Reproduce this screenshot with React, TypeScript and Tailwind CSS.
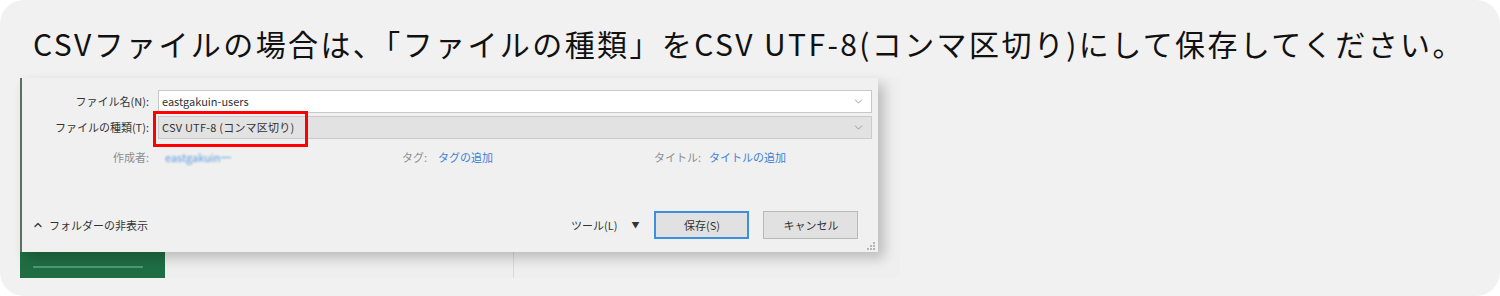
import { ChevronDown, ChevronUp } from "lucide-react";

const jp = "font-['Meiryo_UI','Noto_Sans_CJK_JP',sans-serif]";

// Windows の保存ダイアログ（スクリーンショット部分）
function SaveDialog() {
  return (
    <div className={`relative w-[858px] h-[174px] bg-[#f0f0f0] border-l-2 border-[#5d6f61] shadow-[6px_6px_12px_rgba(0,0,0,0.22)] text-[11px] text-[#333] ${jp}`}>
      <div className="flex flex-col gap-[3px] pt-[12px] pr-[6px]">
        <div className="flex items-center h-[23px]">
          <span className="w-[131px] pr-[4px] text-right">ファイル名(N):</span>
          <div className="flex-1 h-[23px] ml-[5px] bg-white border border-[#c9c9c9] flex items-center justify-between pl-[3px] pr-[6px]">
            <span>eastgakuin-users</span>
            <ChevronDown size={13} className="text-[#8a8a8a]" strokeWidth={1.5} />
          </div>
        </div>
        <div className="flex items-center h-[23px]">
          <span className="w-[131px] pr-[4px] text-right">ファイルの種類(T):</span>
          <div className="relative flex-1 h-[23px] ml-[5px] bg-[#e2e2e2] border border-[#cacaca] flex items-center justify-between pl-[3px] pr-[6px]">
            <span className="tracking-[0.02em]">CSV UTF-8 (コンマ区切り)</span>
            <ChevronDown size={13} className="text-[#8a8a8a]" strokeWidth={1.5} />
            <div className="absolute left-[-6px] top-[-6px] w-[155px] h-[36px] border-[3px] border-[#ff0000]" />
          </div>
        </div>
        <div className="flex items-center h-[30px] text-[#8d8d8d]">
          <span className="w-[131px] pr-[4px] text-right">作成者:</span>
          <span className="ml-[12px] w-[86px] text-[#5b9be0] blur-[1.2px]">eastgakuin一</span>
          <span className="ml-[151px] w-[36px]">タグ:</span>
          <span className="text-[#3d82d6]">タグの追加</span>
          <span className="ml-[161px] w-[55px]">タイトル:</span>
          <span className="text-[#3d82d6]">タイトルの追加</span>
        </div>
      </div>
      <div className="absolute left-0 right-0 bottom-[13px] flex items-center">
        <div className="flex items-center gap-[5px] pl-[10px] w-[540px]">
          <ChevronUp size={12} strokeWidth={3} className="text-[#444]" />
          <span>フォルダーの非表示</span>
        </div>
        <span className="ml-[9px]">ツール(L)</span>
        <span className="ml-[14px] text-[8px]">▼</span>
        <button className="ml-[15px] w-[95px] h-[28px] bg-[#e1e1e1] border-2 border-[#3c8fdc] text-[11px]">保存(S)</button>
        <button className="ml-[14px] w-[95px] h-[28px] bg-[#e1e1e1] border border-[#b9b9b9] text-[11px]">キャンセル</button>
      </div>
      <svg className="absolute right-[3px] bottom-[2px]" width="8" height="8" viewBox="0 0 8 8">
        <rect x="6" y="0" width="2" height="2" fill="#b5b5b5" />
        <rect x="3" y="3" width="2" height="2" fill="#b5b5b5" />
        <rect x="6" y="3" width="2" height="2" fill="#b5b5b5" />
        <rect x="0" y="6" width="2" height="2" fill="#b5b5b5" />
        <rect x="3" y="6" width="2" height="2" fill="#b5b5b5" />
        <rect x="6" y="6" width="2" height="2" fill="#b5b5b5" />
      </svg>
    </div>
  );
}

export default function App() {
  return (
    <div className="w-[1500px] h-[296px] bg-white">
      <div className="h-full rounded-[24px] bg-[#f1f1f1] pl-[20px] pt-[21px]">
        <p className="ml-[13px] h-[44px] leading-[44px] text-[30px] tracking-[0.08em] text-[#111] font-['Noto_Sans_CJK_JP',sans-serif] whitespace-nowrap">
          CSVファイルの場合は、「ファイルの種類」をCSV UTF-8(コンマ区切り)にして保存してください。
        </p>
        <div className="mt-[13px] w-[880px] h-[200px] flex flex-col bg-[#efefef]">
          <div className="relative z-10">
            <SaveDialog />
          </div>
          <div className="flex h-[26px]">
            <div className="w-[145px] bg-[#1f6e43] pt-[14px] pl-[13px]">
              <div className="w-[110px] h-[2px] bg-[#4f9a6e]" />
            </div>
            <div className="w-[349px] border-r border-[#dadada]" />
          </div>
        </div>
      </div>
    </div>
  );
}
